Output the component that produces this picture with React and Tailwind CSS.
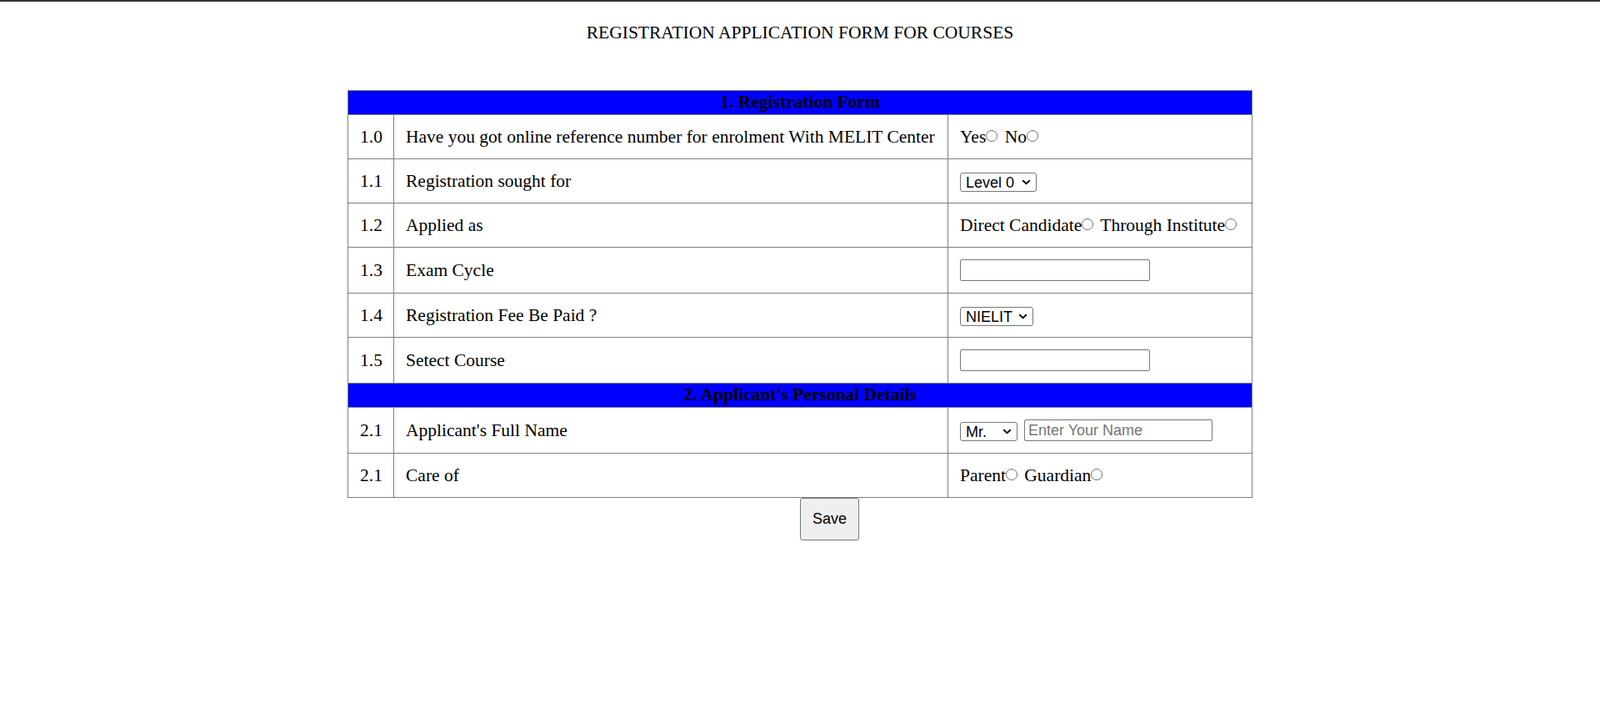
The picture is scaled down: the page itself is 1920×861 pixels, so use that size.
import { useState } from 'react';

const sans = "font-['Liberation_Sans',Arial,sans-serif]";

// small native-looking select with drawn chevron
const Select = ({ width, options }) => (
  <span className={`relative inline-block align-middle h-[23px] ${width}`}>
    <select
      className={`appearance-none w-full h-full border border-[#767676] rounded-[3px] bg-white pl-[6px] pr-[18px] text-[18px] leading-none text-black ${sans}`}
      defaultValue={options[0]}
    >
      {options.map((o) => (
        <option key={o}>{o}</option>
      ))}
    </select>
    <svg
      className="pointer-events-none absolute right-[7px] top-[9px]"
      width="11"
      height="7"
      viewBox="0 0 11 7"
      fill="none"
    >
      <path d="M1.2 1.2 L5.5 5.3 L9.8 1.2" stroke="#000" strokeWidth="1.9" />
    </svg>
  </span>
);

const TextBox = ({ width, placeholder }) => (
  <input
    type="text"
    placeholder={placeholder}
    className={`h-[26px] border border-[#767676] rounded-[2px] bg-white px-[4px] text-[18px] text-black placeholder:text-[#757575] align-middle ${sans} ${width}`}
  />
);

// unchecked radio circle
const Radio = () => (
  <span className="inline-block w-[14px] h-[14px] shrink-0 mr-[3px] rounded-full border border-[#6f6f6f] bg-white align-[1px]" />
);

const Header = ({ children }) => (
  <tr>
    <th colSpan={3} className="bg-[#0000ff] border border-[#808080] pt-[1px] pb-[3px] px-0 leading-[24px] font-bold text-center">
      {children}
    </th>
  </tr>
);

const Row = ({ no, label, children }) => (
  <tr>
    <td className="border border-[#808080] p-[14px] text-center align-middle">{no}</td>
    <td className="border border-[#808080] p-[14px] align-middle">{label}</td>
    <td className="border border-[#808080] py-[14px] pl-[14px] pr-[12px] align-middle">
      <div className="flex items-center min-h-[24px] whitespace-nowrap">{children}</div>
    </td>
  </tr>
);

export default function App() {
  const [saved, setSaved] = useState(false);

  return (
    <div className="min-h-screen bg-white text-black font-['Liberation_Serif','Times_New_Roman',serif]">
      <div className="h-[2px] bg-[#2f323c]" />
      <p className="mt-[25px] text-center text-[21.5px] leading-[24px]">
        REGISTRATION APPLICATION FORM FOR COURSES
      </p>

      <form
        className="mt-[57px]"
        onSubmit={(e) => {
          e.preventDefault();
          setSaved(!saved);
        }}
      >
        <table className="mx-auto w-[1086px] table-fixed border-collapse border border-[#808080] text-[21.5px] leading-[24px]">
          <colgroup>
            <col className="w-[55px]" />
            <col className="w-[665px]" />
            <col />
          </colgroup>
          <tbody>
            <Header>1. Registration Form</Header>
            <Row no="1.0" label="Have you got online reference number for enrolment With MELIT Center">
              <div className="block leading-[24px]">
                Yes<Radio /> No<Radio />
              </div>
            </Row>
            <Row no="1.1" label="Registration sought for">
              <Select width="w-[92px]" options={['Level 0', 'Level 1', 'Level 2']} />
            </Row>
            <Row no="1.2" label="Applied as">
              <div className="block leading-[24px]">
                Direct Candidate<Radio /> Through Institute<Radio />
              </div>
            </Row>
            <Row no="1.3" label="Exam Cycle">
              <TextBox width="w-[228px]" />
            </Row>
            <Row no="1.4" label="Registration Fee Be Paid ?">
              <Select width="w-[88px]" options={['NIELIT', 'Center']} />
            </Row>
            <Row no="1.5" label="Setect Course">
              <TextBox width="w-[228px]" />
            </Row>
            <Header>2. Applicant's Personal Details</Header>
            <Row no="2.1" label="Applicant's Full Name">
              <Select width="w-[69px]" options={['Mr.', 'Ms.', 'Mrs.']} />
              <span className="w-[8px]" />
              <TextBox width="w-[226px]" placeholder="Enter Your Name" />
            </Row>
            <Row no="2.1" label="Care of">
              <div className="block leading-[24px]">
                Parent<Radio /> Guardian<Radio />
              </div>
            </Row>
          </tbody>
        </table>
        <button
          type="submit"
          className={`ml-[50%] block w-[71px] h-[51px] bg-[#efefef] border border-[#767676] rounded-[3px] text-[18px] text-black ${sans}`}
        >
          Save
        </button>
      </form>
    </div>
  );
}
